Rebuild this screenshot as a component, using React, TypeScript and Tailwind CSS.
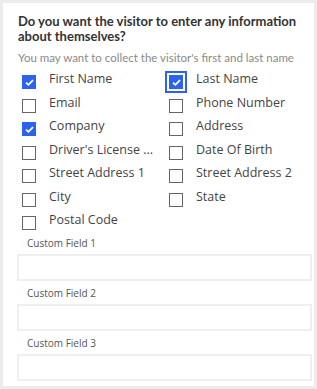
import React from "react";

const items: { label: string; checked?: boolean; focused?: boolean }[] = [
  { label: "First Name", checked: true },
  { label: "Last Name", checked: true, focused: true },
  { label: "Email" },
  { label: "Phone Number" },
  { label: "Company", checked: true },
  { label: "Address" },
  { label: "Driver's License ..." },
  { label: "Date Of Birth" },
  { label: "Street Address 1" },
  { label: "Street Address 2" },
  { label: "City" },
  { label: "State" },
  { label: "Postal Code" },
];

function Box({ checked, focused }: { checked?: boolean; focused?: boolean }) {
  const inner = checked ? (
    <div className="w-[14px] h-[14px] bg-[#2b63f0] flex items-center justify-center">
      <svg width="9" height="7" viewBox="0 0 9 7" fill="none">
        <path d="M1 3.6 L3.4 5.8 L8 1.2" stroke="white" strokeWidth="1.8" />
      </svg>
    </div>
  ) : (
    <div className="w-[14px] h-[14px] border-[1.5px] border-[#62656c] bg-white" />
  );
  if (focused) {
    return (
      <div className="p-[2px] border-2 border-[#2b63f0] -m-[4px]">{inner}</div>
    );
  }
  return inner;
}

export default function App() {
  return (
    <div
      className="w-[317px] h-[389px] bg-[#ececec] pt-[3px] pl-[3px]"
      style={{ fontFamily: "'Open Sans', sans-serif" }}
    >
      <div className="w-[311px] h-[383px] bg-white pl-[14px] pr-[2px] pt-[11px]">
        <div
          className="pl-[1px] pr-[10px] text-[13px] font-bold leading-[15px] text-[#333]"
          style={{ fontFamily: "Lato, sans-serif" }}
        >
          Do you want the visitor to enter any information about themselves?
        </div>
        <div
          className="pl-[1px] mt-[6px] text-[11.5px] leading-[15px] text-[#8a8a8a] whitespace-nowrap"
          style={{ fontFamily: "Lato, sans-serif" }}
        >
          You may want to collect the visitor's first and last name
        </div>
        <div className="grid grid-cols-[147px_1fr] auto-rows-[23.5px] mt-[6px] pl-[5px]">
          {items.map((it) => (
            <div key={it.label} className="flex items-start">
              <div className="mt-[4px] w-[14px] h-[14px] shrink-0">
                <Box checked={it.checked} focused={it.focused} />
              </div>
              <span className="ml-[13px] text-[12.5px] leading-[15px] text-[#444] whitespace-nowrap">
                {it.label}
              </span>
            </div>
          ))}
        </div>
        {[1, 2, 3].map((n) => (
          <div key={n} className={n === 1 ? "mt-0" : "mt-[5px]"}>
            <div className="pl-[10px] text-[10px] leading-[14px] text-[#555]">
              Custom Field {n}
            </div>
            <div className="mt-[4px] h-[27px] border-2 border-[#efefef] bg-white" />
          </div>
        ))}
      </div>
    </div>
  );
}
